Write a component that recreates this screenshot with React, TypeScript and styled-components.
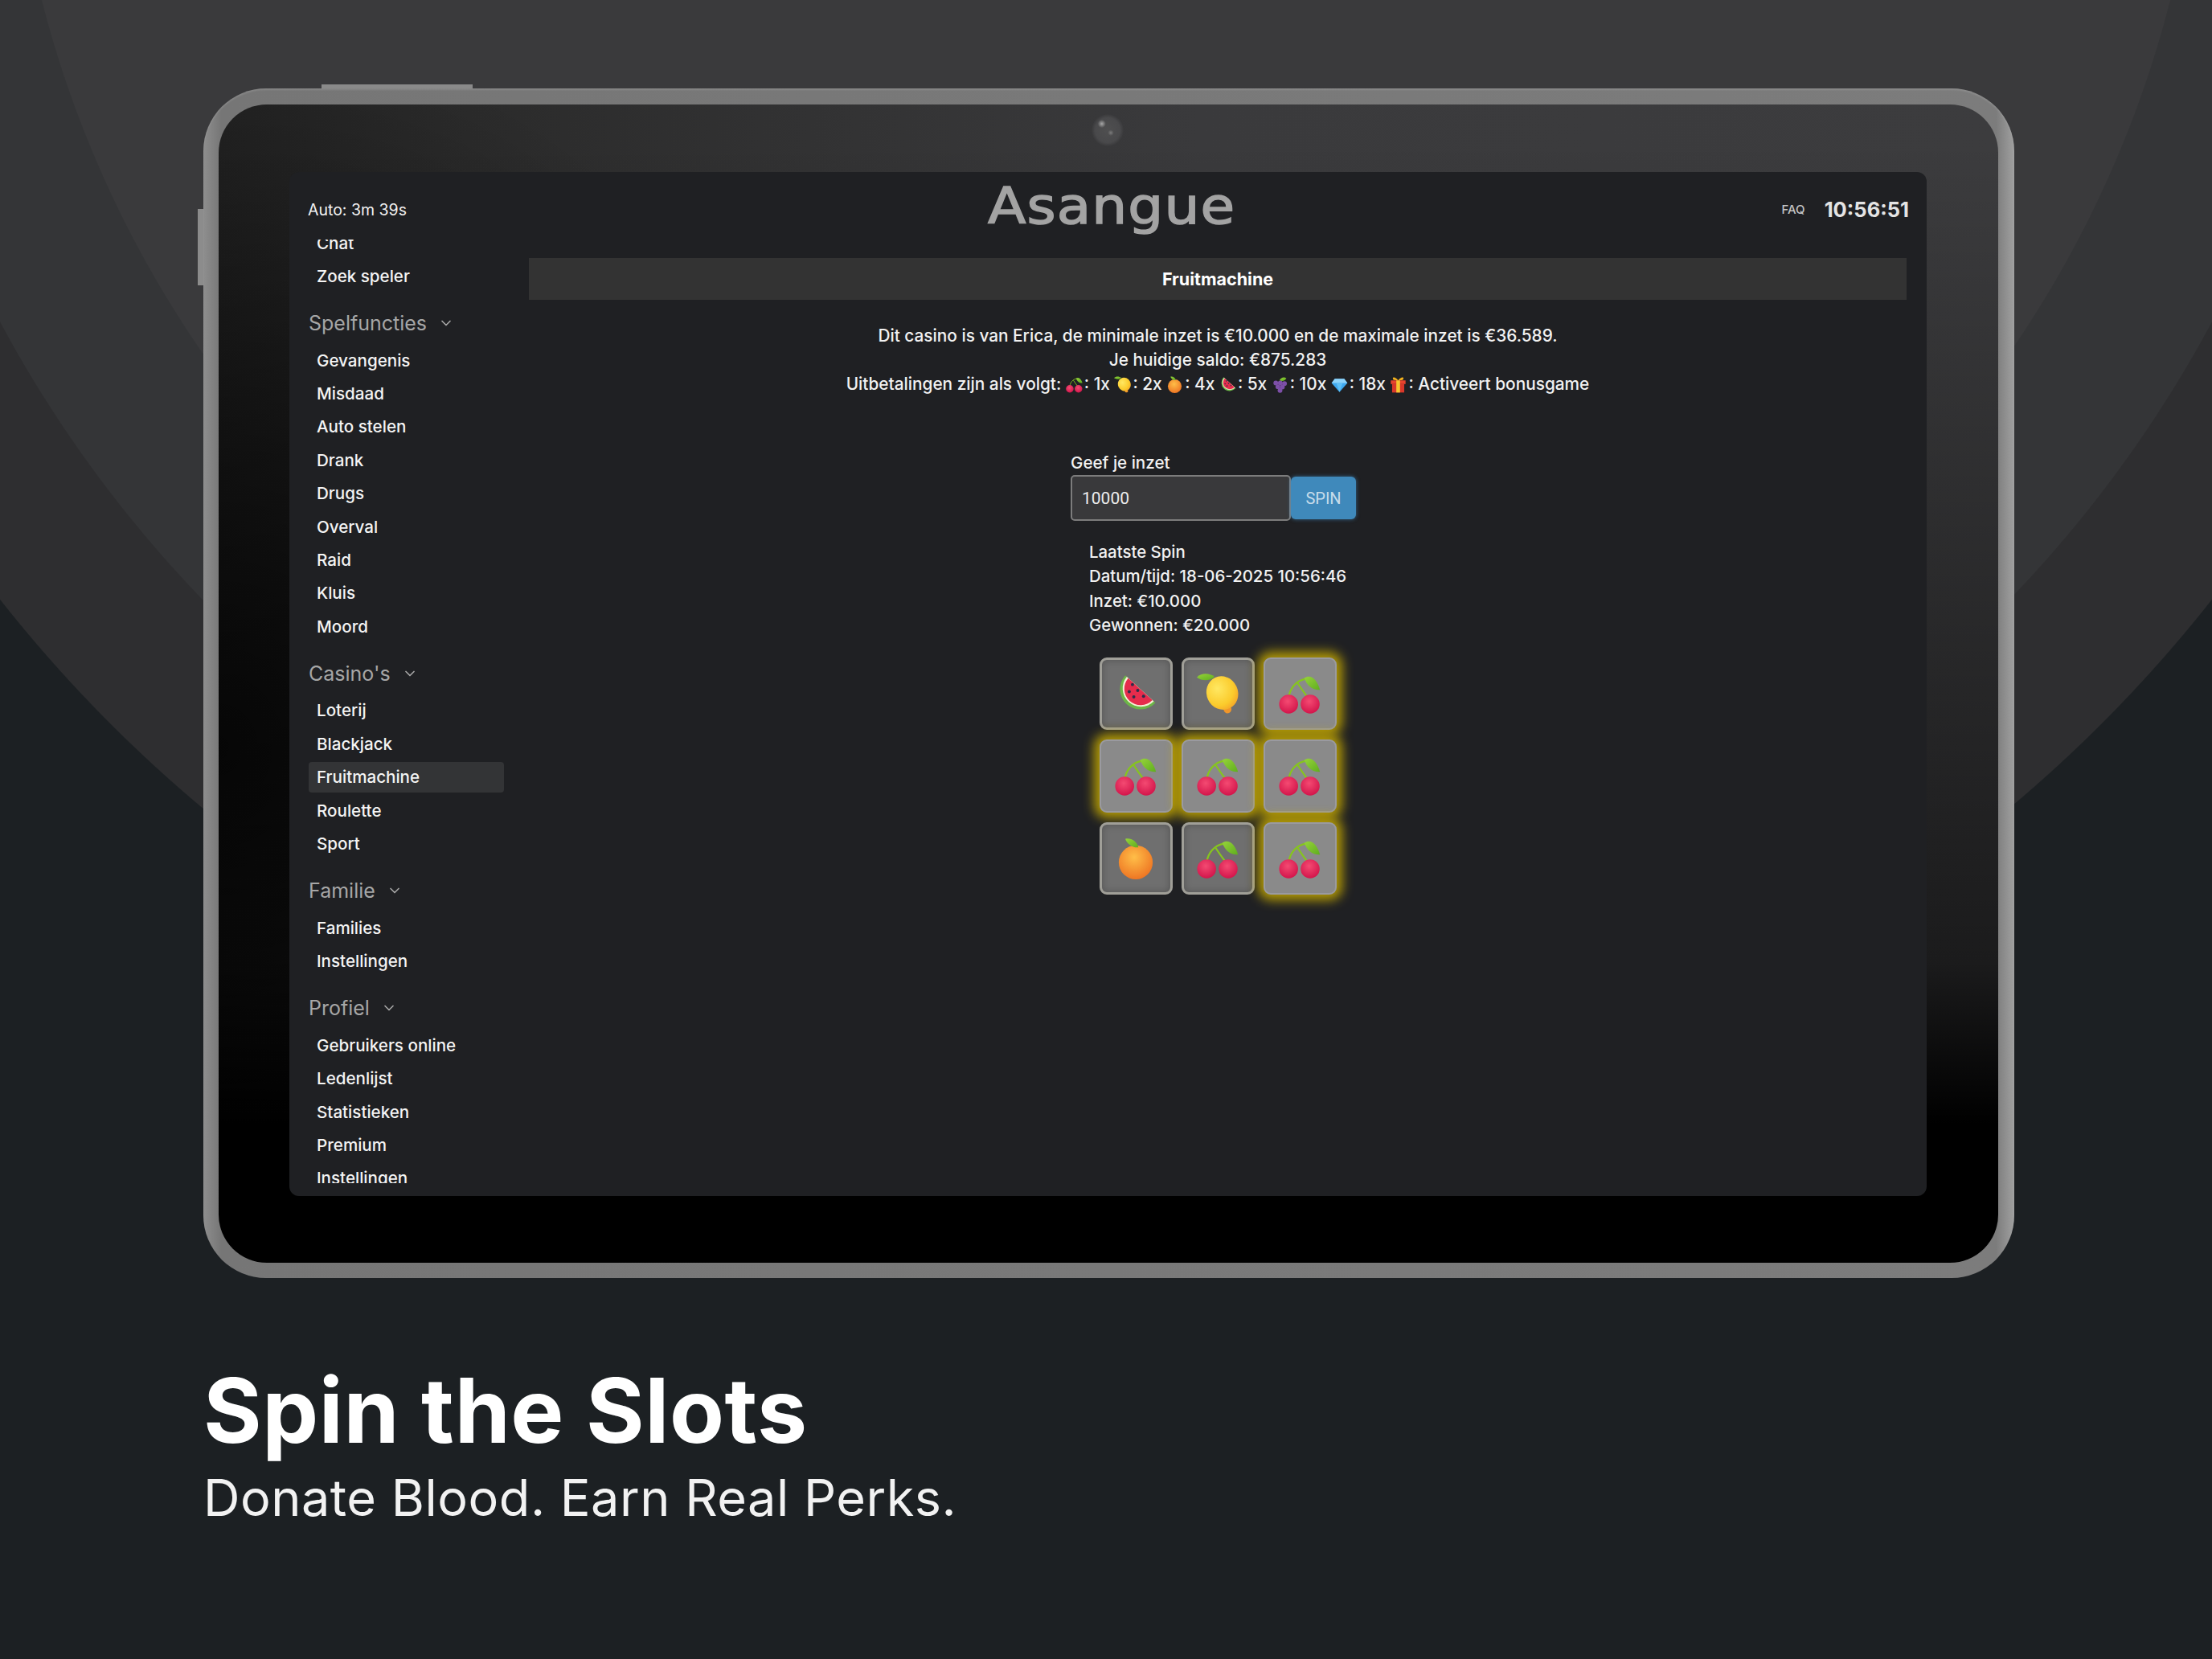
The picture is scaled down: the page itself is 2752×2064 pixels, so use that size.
import { ChevronDown } from 'lucide-react'
import styled, { createGlobalStyle } from 'styled-components'

const GlobalStyle = createGlobalStyle`
  html, body {
    margin: 0;
    background-color: #1c2023;
  }
`

const Page = styled.div`
  width: 2752px;
  height: 2064px;
  overflow: hidden;
  box-sizing: border-box;
  padding: 110px 246px 0 253px;
  font-family: Inter, 'Open Sans', sans-serif;
  background: radial-gradient(
    circle at 1376px -338px,
    #3a3a3c 0,
    #3a3a3c 1366px,
    #343537 1367px,
    #343537 1561px,
    #2e2e30 1562px,
    #2e2e30 1751px,
    #1c2023 1752px
  );
`

const Tablet = styled.div`
  position: relative;
  height: 1480px;
  box-sizing: border-box;
  padding: 20px 20px 19px 19px;
  border-radius: 78px;
  background: linear-gradient(90deg, #8e8e8e 0, #767676 1%, #7c7c7c 99%, #a0a0a0 100%);
  box-shadow: inset 0 2px 2px rgba(255, 255, 255, 0.12);
`

const TopKey = styled.div`
  position: absolute;
  top: -5px;
  left: 147px;
  width: 188px;
  height: 5px;
  background-color: #8a8a8a;
`

const SideKey = styled.div`
  position: absolute;
  top: 150px;
  left: -7px;
  width: 7px;
  height: 95px;
  background-color: #8c8c8c;
`

const Glass = styled.div`
  height: 100%;
  box-sizing: border-box;
  padding: 84px 89px 83px 88px;
  border-radius: 60px;
  background:
    radial-gradient(ellipse 800px 900px at 0 800px, rgba(0, 0, 0, 0.7), rgba(0, 0, 0, 0)),
    linear-gradient(180deg, rgba(0, 0, 0, 0) 3%, rgba(0, 0, 0, 0.55) 74%, #000 88%),
    linear-gradient(90deg, #232323 0, #2b2b2b 14%, #3a3a3c 55%, #3c3c3e 100%);
`

const Camera = styled.div`
  position: absolute;
  top: 32px;
  left: 1105px;
  width: 40px;
  height: 40px;
  border-radius: 50%;
  background:
    radial-gradient(circle at 32% 30%, #a8a8a8 0, rgba(168, 168, 168, 0) 13%),
    radial-gradient(circle at 60% 58%, #7c7c7c 0, rgba(124, 124, 124, 0) 11%),
    radial-gradient(circle, #4f4f50 0, #49494b 55%, rgba(64, 64, 66, 0) 72%);
`

const Screen = styled.div`
  height: 100%;
  display: flex;
  flex-direction: column;
  border-radius: 12px;
  background-color: #1f2023;
  color: #f2f2f2;
  font-size: 21px;
  font-weight: 500;
  overflow: hidden;
`

const Header = styled.header`
  flex: 0 0 84px;
  display: grid;
  grid-template-columns: 1fr auto 1fr;
  align-items: center;
  padding: 0 22px 0 23px;
`

const AutoTimer = styled.div`
  font-size: 19.5px;
  font-weight: 400;
  padding-top: 9px;
`

const Logo = styled.div`
  font-family: 'DejaVu Sans', sans-serif;
  font-size: 63px;
  line-height: 64px;
  letter-spacing: 1px;
  font-weight: 400;
  color: #a3a3a3;
  -webkit-text-stroke: 1.5px #a3a3a3;
  transform: scaleX(1.1);
  padding-top: 1px;
  margin-left: 8px;
`

const HeaderRight = styled.div`
  display: flex;
  justify-content: flex-end;
  align-items: center;
  gap: 24px;
  padding-top: 9px;
`

const Faq = styled.span`
  font-size: 15px;
  font-weight: 500;
  color: #c4c4c4;
`

const Clock = styled.span`
  font-size: 25.5px;
  font-weight: 700;
  color: #e4e4e4;
`

const Body = styled.div`
  flex: 1;
  display: flex;
  min-height: 0;
`

const Sidebar = styled.nav`
  flex: 0 0 298px;
  box-sizing: border-box;
  height: 1174px;
  padding-left: 24px;
  overflow: hidden;
`

const SidebarList = styled.div`
  margin-top: -16.6px;
`

const GroupTitle = styled.div`
  height: 50.7px;
  margin-top: 12.6px;
  display: flex;
  align-items: center;
  gap: 14px;
  font-size: 25px;
  font-weight: 400;
  color: #a6a6a6;
`

const NavRow = styled.div`
  height: 41.4px;
  display: flex;
  align-items: center;
`

const NavLink = styled.a<{ $active?: boolean }>`
  width: 243px;
  height: 38px;
  box-sizing: border-box;
  padding-left: 10px;
  display: flex;
  align-items: center;
  border-radius: 4px;
  font-size: 20.6px;
  color: #f4f4f4;
  background-color: ${({ $active }) => ($active ? '#333436' : 'transparent')};
`

const Content = styled.main`
  flex: 1;
  display: flex;
  flex-direction: column;
  align-items: center;
  padding: 23px 25px 0 0;
`

const TitleBar = styled.div`
  align-self: stretch;
  height: 52px;
  flex-shrink: 0;
  display: flex;
  align-items: center;
  justify-content: center;
  background-color: #333333;
  font-size: 21.5px;
  font-weight: 700;
  color: #fff;
`

const Intro = styled.div`
  margin-top: 30px;
  text-align: center;
  line-height: 30px;
  font-size: 20.8px;
`

const PayIcon = styled.svg`
  width: 21px;
  height: 21px;
  margin: 0 2px -4px 0;
`

const StakeForm = styled.form`
  width: 366px;
  margin-top: 68px;
`

const StakeLabel = styled.label`
  display: block;
  height: 30px;
  line-height: 30px;
  font-size: 20.6px;
`

const StakeRow = styled.div`
  display: flex;
  align-items: center;
`

const StakeInput = styled.input`
  width: 274px;
  height: 57px;
  box-sizing: border-box;
  padding: 0 12px;
  border: 2px solid #7c7c7c;
  border-radius: 5px;
  background-color: #39393b;
  color: #ececec;
  font-family: Roboto, sans-serif;
  font-size: 21px;
`

const SpinButton = styled.button`
  width: 81px;
  height: 53px;
  border: 0;
  border-radius: 6px;
  background-color: #3f89bb;
  box-shadow: 0 0 5px rgba(70, 150, 210, 0.6);
  color: #c7dcea;
  font-family: Roboto, sans-serif;
  font-size: 20px;
`

const LastSpin = styled.div`
  width: 320px;
  margin-top: 24px;
  line-height: 30.4px;
  font-size: 20.4px;
  white-space: nowrap;
`

const Reels = styled.div`
  display: grid;
  grid-template-columns: repeat(3, 91px);
  grid-auto-rows: 90.5px;
  gap: 12px 11px;
  margin-top: 24px;
`

const Reel = styled.div<{ $win?: boolean }>`
  display: flex;
  align-items: center;
  justify-content: center;
  box-sizing: border-box;
  border-radius: 9px;
  border: ${({ $win }) => ($win ? '2px solid #9a9aa0' : '3px solid #a09f98')};
  background-color: ${({ $win }) => ($win ? '#8a8a8a' : '#6f6f6f')};
  box-shadow: ${({ $win }) =>
    $win ? '0 0 14px 7px rgba(205, 175, 0, 0.85)' : 'inset 0 0 10px rgba(0, 0, 0, 0.25)'};
`

const ReelIcon = styled.svg`
  width: 52px;
  height: 52px;
`

const Caption = styled.div`
  padding-top: 99px;
  color: #fff;
`

const Headline = styled.h1`
  margin: 0;
  font-size: 111px;
  line-height: 132px;
  font-weight: 700;
  letter-spacing: 0.6px;
`

const Subline = styled.p`
  margin: 0;
  font-size: 63px;
  line-height: 84px;
  font-weight: 400;
  letter-spacing: 0.5px;
  color: #f2f2f2;
`

const Sprite = styled.svg`
  position: absolute;
  width: 0;
  height: 0;
`

const FruitSprite = () => (
  <Sprite aria-hidden="true">
    <defs>
      <radialGradient id="berry" cx="45%" cy="35%" r="70%">
        <stop offset="0" stopColor="#f44a72" />
        <stop offset="1" stopColor="#d01148" />
      </radialGradient>
      <linearGradient id="leaf" x1="0" y1="0" x2="1" y2="1">
        <stop offset="0" stopColor="#96d23a" />
        <stop offset="1" stopColor="#5fae1e" />
      </linearGradient>
      <radialGradient id="lemon" cx="42%" cy="32%" r="78%">
        <stop offset="0" stopColor="#ffe862" />
        <stop offset="0.65" stopColor="#fbcb2c" />
        <stop offset="1" stopColor="#f39a28" />
      </radialGradient>
      <radialGradient id="orange" cx="45%" cy="35%" r="72%">
        <stop offset="0" stopColor="#ffbe48" />
        <stop offset="1" stopColor="#ec6e1f" />
      </radialGradient>
    </defs>
    <symbol id="cherry" viewBox="0 0 64 64">
      <path d="M15 38C17 24 26 12 42 9" fill="none" stroke="#86c51e" strokeWidth="2.8" />
      <path d="M29 16C34 24 40 32 46 40" fill="none" stroke="#86c51e" strokeWidth="2.8" />
      <path d="M39 8C50 1 59 12 63 26C52 27 43 20 39 8Z" fill="url(#leaf)" />
      <circle cx="15" cy="48" r="14.5" fill="url(#berry)" />
      <circle cx="48" cy="48" r="14.5" fill="url(#berry)" />
    </symbol>
    <symbol id="lemon-fruit" viewBox="0 0 64 64">
      <circle cx="47" cy="56" r="6" fill="#f0962a" />
      <ellipse cx="39" cy="31" rx="24" ry="26" fill="url(#lemon)" transform="rotate(-25 39 31)" />
      <path d="M0 7C8 -1 20 1 27 6C20 13 8 13 0 7Z" fill="url(#leaf)" />
    </symbol>
    <symbol id="orange-fruit" viewBox="0 0 64 64">
      <circle cx="32" cy="38" r="26" fill="url(#orange)" />
      <path d="M16 2C25 0 34 6 36 15C27 16 19 10 16 2Z" fill="url(#leaf)" />
    </symbol>
    <symbol id="melon" viewBox="0 0 64 64">
      <path d="M16 4L62 46A31 31 0 0 1 16 4Z" fill="#6cb548" />
      <path d="M18.3 6.2L59.7 43.8A28 28 0 0 1 18.3 6.2Z" fill="#f5efd8" />
      <path d="M20.5 8.2L57.5 41.8A25 25 0 0 1 20.5 8.2Z" fill="#e62c4c" />
      <circle cx="27" cy="18" r="2.4" fill="#2b2d4a" />
      <circle cx="22" cy="29" r="2.4" fill="#2b2d4a" />
      <circle cx="35" cy="27" r="2.4" fill="#2b2d4a" />
      <circle cx="29" cy="37" r="2.4" fill="#2b2d4a" />
      <circle cx="44" cy="36" r="2.4" fill="#2b2d4a" />
    </symbol>
    <symbol id="grapes" viewBox="0 0 64 64">
      <path d="M30 16C36 4 48 2 56 8C50 18 40 20 30 16Z" fill="url(#leaf)" />
      <g fill="#7d4fa8">
        <circle cx="16" cy="26" r="9" />
        <circle cx="33" cy="26" r="9" />
        <circle cx="49" cy="28" r="9" />
        <circle cx="24" cy="40" r="9" />
        <circle cx="41" cy="41" r="9" />
        <circle cx="32" cy="54" r="9" />
      </g>
    </symbol>
    <symbol id="gem" viewBox="0 0 64 64">
      <path d="M14 10H50L62 26L32 60L2 26Z" fill="#3fa9f0" />
      <path d="M2 26H62L50 10H14Z" fill="#8fd4fb" />
      <path d="M20 26L32 60L44 26Z" fill="#5fc0f7" />
    </symbol>
    <symbol id="gift" viewBox="0 0 64 64">
      <path d="M32 16C22 2 10 2 12 10C13 16 24 16 32 16C40 16 51 16 52 10C54 2 42 2 32 16Z" fill="#f2b01e" />
      <rect x="4" y="16" width="56" height="14" fill="#e8432e" />
      <rect x="9" y="30" width="46" height="32" fill="#d9372a" />
      <rect x="25" y="16" width="14" height="46" fill="#f7c62f" />
    </symbol>
  </Sprite>
)

const payouts = [
  { icon: 'cherry', text: ': 1x' },
  { icon: 'lemon-fruit', text: ': 2x' },
  { icon: 'orange-fruit', text: ': 4x' },
  { icon: 'melon', text: ': 5x' },
  { icon: 'grapes', text: ': 10x' },
  { icon: 'gem', text: ': 18x' },
  { icon: 'gift', text: ': Activeert bonusgame' },
]

const navGroups = [
  {
    items: ['Chat', 'Zoek speler'],
  },
  {
    title: 'Spelfuncties',
    items: ['Gevangenis', 'Misdaad', 'Auto stelen', 'Drank', 'Drugs', 'Overval', 'Raid', 'Kluis', 'Moord'],
  },
  {
    title: "Casino's",
    items: ['Loterij', 'Blackjack', 'Fruitmachine', 'Roulette', 'Sport'],
  },
  {
    title: 'Familie',
    items: ['Families', 'Instellingen'],
  },
  {
    title: 'Profiel',
    items: ['Gebruikers online', 'Ledenlijst', 'Statistieken', 'Premium', 'Instellingen'],
  },
]

const reels = [
  { icon: 'melon' },
  { icon: 'lemon-fruit' },
  { icon: 'cherry', win: true },
  { icon: 'cherry', win: true },
  { icon: 'cherry', win: true },
  { icon: 'cherry', win: true },
  { icon: 'orange-fruit' },
  { icon: 'cherry' },
  { icon: 'cherry', win: true },
]

export default function App() {
  return (
    <Page>
      <GlobalStyle />
      <FruitSprite />
      <Tablet>
        <TopKey />
        <SideKey />
        <Camera />
        <Glass>
          <Screen>
            <Header>
              <AutoTimer>Auto: 3m 39s</AutoTimer>
              <Logo>Asangue</Logo>
              <HeaderRight>
                <Faq>FAQ</Faq>
                <Clock>10:56:51</Clock>
              </HeaderRight>
            </Header>
            <Body>
              <Sidebar>
                <SidebarList>
                  {navGroups.map((group) => (
                    <div key={group.title ?? 'top'}>
                      {group.title && (
                        <GroupTitle>
                          {group.title}
                          <ChevronDown size={20} strokeWidth={2} />
                        </GroupTitle>
                      )}
                      {group.items.map((item) => (
                        <NavRow key={item}>
                          <NavLink $active={item === 'Fruitmachine'}>{item}</NavLink>
                        </NavRow>
                      ))}
                    </div>
                  ))}
                </SidebarList>
              </Sidebar>
              <Content>
                <TitleBar>Fruitmachine</TitleBar>
                <Intro>
                  Dit casino is van Erica, de minimale inzet is €10.000 en de maximale inzet is €36.589.
                  <br />
                  Je huidige saldo: €875.283
                  <br />
                  Uitbetalingen zijn als volgt:
                  {payouts.map((payout) => (
                    <span key={payout.icon}>
                      {' '}
                      <PayIcon>
                        <use href={`#${payout.icon}`} />
                      </PayIcon>
                      {payout.text}
                    </span>
                  ))}
                </Intro>
                <StakeForm>
                  <StakeLabel>Geef je inzet</StakeLabel>
                  <StakeRow>
                    <StakeInput defaultValue="10000" />
                    <SpinButton type="button">SPIN</SpinButton>
                  </StakeRow>
                </StakeForm>
                <LastSpin>
                  Laatste Spin
                  <br />
                  Datum/tijd: 18-06-2025 10:56:46
                  <br />
                  Inzet: €10.000
                  <br />
                  Gewonnen: €20.000
                </LastSpin>
                <Reels>
                  {reels.map((reel, index) => (
                    <Reel key={index} $win={reel.win}>
                      <ReelIcon>
                        <use href={`#${reel.icon}`} />
                      </ReelIcon>
                    </Reel>
                  ))}
                </Reels>
              </Content>
            </Body>
          </Screen>
        </Glass>
      </Tablet>
      <Caption>
        <Headline>Spin the Slots</Headline>
        <Subline>Donate Blood. Earn Real Perks.</Subline>
      </Caption>
    </Page>
  )
}
